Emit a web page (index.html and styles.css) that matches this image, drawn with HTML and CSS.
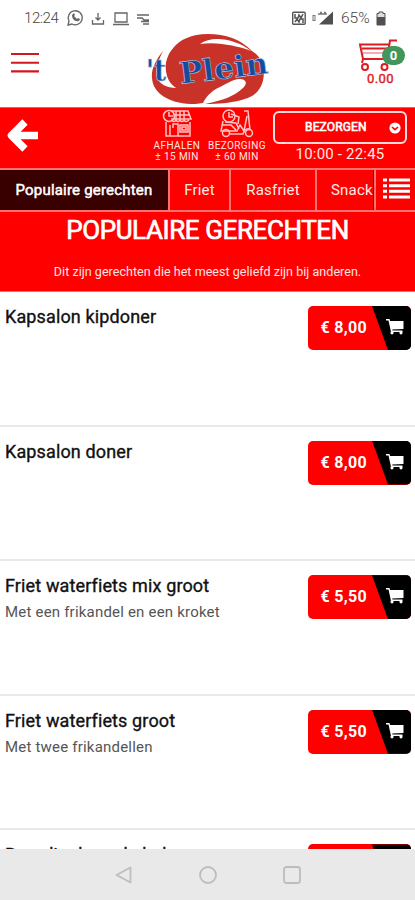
FILE: index.html
```html
<!DOCTYPE html>
<html lang="nl">
<head>
<meta charset="utf-8">
<title>'t Plein</title>
<link rel="stylesheet" href="styles.css">
</head>
<body>
<svg width="0" height="0" class="defs"><defs>
<symbol id="cart" viewBox="0 0 18 16"><path d="M0 0h3.500l.6 2H17.500v8L6.200 10.500l.3 1H16.500v1.500H5L2.500 1.600H0z"/><circle cx="6" cy="13.800" r="1.600"/><circle cx="15" cy="13.800" r="1.600"/></symbol>
</defs></svg>
<div class="phone">
<div class="status">
<span class="clock">12:24</span>
<svg class="sys-left" width="80" height="18" viewBox="0 0 80 18" fill="none" stroke="#666" stroke-width="1.300"><path d="M1 16l1-4a7 7 0 1 1 3 3z"/><path d="M5 6c0 4 3 7 7 6l1-2-2-1-1 1-3-3 1-1-1-2z" fill="#666" stroke="none"/><path d="M25.500 11v4h11v-4M31 4v7M28.500 8.500l2.500 2.500 2.500-2.500" /><path d="M48 4h12v9H48zM46 15.500h16" /><path d="M70 6h12M70 9h5l2 2h5M74 12.500h8M76 15h6" stroke-width="1.400"/></svg>
<svg class="sys-right" width="45" height="18" viewBox="0 0 45 18"><rect x="1.700" y="3.200" width="12.500" height="12" rx="1" fill="none" stroke="#555" stroke-width="1.400"/><path d="M4 5v4h3l1-3 2 3 2-4M4 13l2-3 2 3 1-3h3v4" fill="none" stroke="#555" stroke-width="1.500"/><rect x="22" y="6.500" width="2" height="5" fill="none" stroke="#777"/><path d="M42 2.500v13H28z" fill="#505050"/><path d="M27 5h9M29 3.500h2M33 3.500h2" stroke="#777" stroke-width="1.500"/></svg>
<span class="pct">65%</span>
<svg class="batt" width="10" height="15" viewBox="0 0 10 15"><path d="M3 1h4v1.500h2V14H1V2.500h2z" fill="#ddd" stroke="#505050"/><path d="M1 6h8v8H1z" fill="#505050"/></svg>
</div>
<header class="top">
<svg class="burger" width="28" height="22" viewBox="0 0 28 22"><path d="M0 2h28M0 10.700h28M0 19.400h28" stroke="#cf1820" stroke-width="2.100"/></svg>
<svg class="logo" width="126" height="75" viewBox="0 0 126 75">
<path d="M17 18C9 28 5 37 6 45c1 15 16 25 39 26 5 0 9-.5 12-1 3-6 8-12 17-16 8-4 14-8 19-8 7 0 9 4 4 9-8 8-22 13-38 16 28 0 45-5 51-11 7-7 10-18 6-30-2-5-5-9-10-12C94 6 80 1 62 1 45 1 34 7 28 14c-8 9-10 19-7 29 2 6 5 9 9 12-9 0-17-4-19-11-2-8 2-18 6-26z" fill="#c93229"/>
<path d="M54 11C66 2 90 6 105 18 95 14 84 12 76 11c-8-1-15-1-22 0z" fill="#fff"/>
<g transform="rotate(-7 68 43)" class="logo-text"><text x="34" y="47" textLength="89" lengthAdjust="spacingAndGlyphs" font-size="30">Plein</text></g>
<text x="0" y="48" textLength="20" lengthAdjust="spacingAndGlyphs" font-size="30" class="logo-text">'t</text>
</svg>
<div class="basket">
<svg width="50" height="33" viewBox="0 0 50 33" fill="none" stroke="#dc1c23"><path d="M39 1.500h-7l-3 18.500H5L2 5.500h29M4 9.500h26M5 20l-1 4" stroke-width="2"/><path d="M5 14h25" stroke-width=".7"/><circle cx="7" cy="28" r="3" stroke-width="2"/><circle cx="26.500" cy="28" r="3" stroke-width="2"/></svg>
<span class="badge">0</span>
<span class="total">0.00</span>
</div>
</header>
<section class="info">
<svg class="back" width="33" height="36" viewBox="0 0 33 36"><path d="M18 4L4.500 17.500 18 31M5 17.500h26" fill="none" stroke="#fff" stroke-width="7.500" stroke-linejoin="round"/></svg>
<div class="mode pick">
<svg width="30" height="29" viewBox="0 0 30 29" fill="none" stroke="#ffc4c4" stroke-width="1.500"><path d="M9 2h17l3 8H9M14 2v8M18 2v8M22 2v8M11 6h16M4 13v14h24V13M8 16v11M11 19v-4h5v12M18 16h8v7h-8zM20 18h4v3h-4z"/><circle cx="7" cy="7" r="5.500"/><path d="M7 3v4h4M10 11q2 3 4 0q2 3 4 0q2 3 4 0q2 3 5 0"/></svg>
<span>AFHALEN</span><span>± 15 MIN</span>
</div>
<div class="mode deliver">
<svg width="34" height="29" viewBox="0 0 34 29" fill="none" stroke="#ffc4c4" stroke-width="1.500"><circle cx="9" cy="7" r="6"/><path d="M9 3v5h4M3 12l-2 10h16l3-6 4 6 3-15M24 2h4l2 19M2 16h9l5 5M5 13l11 1 3 6M11 5l8 3-1 7"/><circle cx="6" cy="24" r="3.500"/><circle cx="29" cy="24" r="3.500"/><path d="M10 25h13q1-6 7-5"/></svg>
<span>BEZORGING</span><span>± 60 MIN</span>
</div>
<div class="choice">
<div class="select"><span>BEZORGEN</span><svg width="12" height="12" viewBox="0 0 12 12"><circle cx="6" cy="6" r="5.600" fill="#fff"/><path d="M3 5l3 2.700L9 5" fill="none" stroke="#f00" stroke-width="1.600"/></svg></div>
<div class="hours">10:00 - 22:45</div>
</div>
</section>
<nav class="tabs">
<span class="tab active">Populaire gerechten</span><span class="tab friet">Friet</span><span class="tab ras">Rasfriet</span><span class="tab snack">Snack</span>
<span class="list"><svg width="27" height="21" viewBox="0 0 27 21" stroke="#fff" stroke-width="3"><path d="M0 2h4M6 2h21M0 7.700h4M6 7.700h21M0 13.300h4M6 13.300h21M0 19h4M6 19h21"/></svg></span>
</nav>
<section class="hero"><h1>POPULAIRE GERECHTEN</h1><p>Dit zijn gerechten die het meest geliefd zijn bij anderen.</p></section>
<main class="menu">
<article class="dish"><div><h2>Kapsalon kipdoner</h2></div><div class="price"><b>€ 8,00</b><i><svg><use href="#cart"/></svg></i></div></article>
<article class="dish"><div><h2>Kapsalon doner</h2></div><div class="price"><b>€ 8,00</b><i><svg><use href="#cart"/></svg></i></div></article>
<article class="dish"><div><h2>Friet waterfiets mix groot</h2><p>Met een frikandel en een kroket</p></div><div class="price"><b>€ 5,50</b><i><svg><use href="#cart"/></svg></i></div></article>
<article class="dish"><div><h2>Friet waterfiets groot</h2><p>Met twee frikandellen</p></div><div class="price"><b>€ 5,50</b><i><svg><use href="#cart"/></svg></i></div></article>
<article class="dish"><div><h2>Broodje doner kebab</h2></div><div class="price"><b></b><i></i></div></article>
</main>
<footer class="sysnav">
<svg width="18" height="18" viewBox="0 0 18 18"><path d="M1.500 9L15.500 1.500v15z"/></svg>
<svg width="18" height="18" viewBox="0 0 18 18"><circle cx="9" cy="9" r="8"/></svg>
<svg width="18" height="18" viewBox="0 0 18 18"><rect x="1" y="1" width="16" height="16" rx="2.500"/></svg>
</footer>
</div>
</body>
</html>
```
FILE: styles.css
```css
* { box-sizing: border-box; }
body { margin: 0; font-family: Roboto, sans-serif; background: #fff; color: #111; }
.defs { position: absolute; }
.phone { width: 415px; height: 900px; overflow: hidden; display: flex; flex-direction: column; }
.phone > * { flex-shrink: 0; }
h1, h2, p { margin: 0; font-weight: 400; white-space: nowrap; }
.status { height: 32px; padding: 9px 0 0 24px; display: flex; align-items: flex-start; }
.clock { width: 43px; font: 300 15px/18px Roboto, sans-serif; letter-spacing: -.4px; color: #444; }
.sys-left { overflow: visible; }
.sys-right { margin-left: 144px; }
.pct { width: 34px; margin-left: 5px; font: 300 15.500px/18px Roboto, sans-serif; color: #444; }
.batt { margin-left: 1px; margin-top: 2px; }
.top { height: 75px; display: flex; align-items: flex-start; }
.burger { margin: 20px 0 0 11px; }
.logo { margin: 1px 0 0 107px; overflow: visible; }
.logo-text { font-family: "DejaVu Serif", serif; font-weight: 700; fill: #164b9c; stroke: #b9c5dd; stroke-width: .6px; }
.basket { position: relative; width: 50px; margin: 7px 0 0 86px; display: flex; flex-direction: column; }
.badge { position: absolute; left: 24px; top: 7px; width: 23px; height: 19px; border-radius: 10px; background: #42965b; color: #fff; font: 700 13px/19px Roboto, sans-serif; text-align: center; }
.total { padding-left: 9px; font-size: 13px; line-height: 14px; color: #dc1c23; -webkit-text-stroke: .4px #dc1c23; letter-spacing: .4px; }
.info { height: 61px; background: #f00; border-top: 1px solid #ff5656; display: flex; color: #ffe6e6; }
.back { margin: 10px 0 0 7px; }
.mode { display: flex; flex-direction: column; align-items: center; font-size: 10px; line-height: 10.500px; letter-spacing: .4px; white-space: nowrap; }
.mode svg { margin-bottom: 3px; }
.pick { width: 50px; margin: 1px 0 0 112px; }
.deliver { width: 60px; margin: 1px 0 0 5px; }
.choice { margin: 3px 0 0 6px; width: 134px; }
.select { height: 33px; border: 2px solid #ffdada; border-radius: 6px; display: flex; align-items: center; justify-content: space-between; padding: 0 4px 0 30px; font-size: 12px; letter-spacing: .15px; -webkit-text-stroke: .6px #fff; color: #fff; }
.select span { position: relative; top: -1px; }
.hours { text-align: center; font-size: 15px; letter-spacing: .2px; line-height: 21px; }
.tabs { height: 44px; background: #f00; border-top: 2px solid #ff7070; border-bottom: 2px solid #ff7070; display: flex; align-items: stretch; color: #ffeaea; font-size: 15px; letter-spacing: .2px; line-height: 40px; white-space: nowrap; }
.tab { border-right: 2px solid #ff7070; text-align: center; }
.active { width: 170px; background: #390000; color: #fff; -webkit-text-stroke: .5px #fff; }
.friet { width: 61px; }
.ras { width: 86px; }
.snack { width: 57px; padding-left: 14px; text-align: left; border-right: 1px solid #700; }
.list { flex: 1; border-left: 2px solid #ff7070; padding: 8px 0 0 7px; line-height: 0; }
.hero { height: 80px; background: #f00; border-bottom: 1px solid #ff7070; color: #fff; text-align: center; }
.hero h1 { padding-top: 1px; font-size: 26px; line-height: 34px; letter-spacing: -.4px; -webkit-text-stroke: .7px #fff; }
.hero p { margin-top: 16px; font-size: 12.500px; letter-spacing: .04px; line-height: 18px; color: #ffe5e5; }
.menu { height: 557px; overflow: hidden; }
.dish { height: 134.600px; border-bottom: 2px solid #e9e9e9; padding: 14px 4px 0 5px; display: flex; justify-content: space-between; align-items: flex-start; }
.dish h2 { margin-top: -1px; font-size: 18px; letter-spacing: .13px; line-height: 23px; -webkit-text-stroke: .35px #111; }
.dish p { margin-top: 5px; font-size: 15px; letter-spacing: .2px; line-height: 20px; color: #555; }
.price { width: 103px; height: 44px; border-radius: 5px; overflow: hidden; background: #f00; display: flex; color: #fff; }
.price b { width: 64px; text-align: right; padding-right: 5px; flex: none; font-weight: 700; font-size: 16px; letter-spacing: .3px; line-height: 44px; white-space: nowrap; }
.price i { flex: 1; background: #000; clip-path: polygon(0 0, 100% 0, 100% 100%, 16px 100%); padding: 13px 0 0 14px; }
.price svg { width: 18px; height: 16px; fill: #fff; display: block; }
.sysnav { height: 51px; background: #e9e9e9; display: flex; gap: 66px; padding: 17px 0 0 115px; }
.sysnav svg { fill: none; stroke: #bdbdbd; stroke-width: 1.800; stroke-linejoin: round; }
```
